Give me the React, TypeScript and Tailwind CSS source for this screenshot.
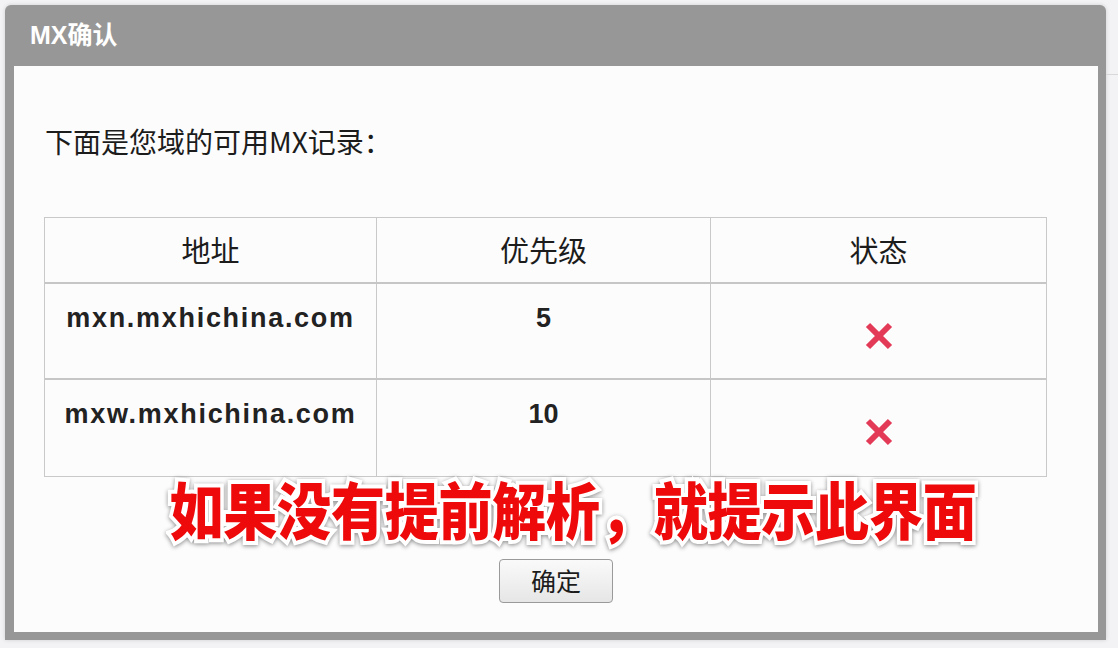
import React from "react";

const cjk = '"Noto Sans CJK SC", "Noto Sans", sans-serif';
const latin = '"Liberation Sans", Arial, "Noto Sans CJK SC", sans-serif';

function RedX() {
  return (
    <svg width="28" height="28" viewBox="0 0 28 28">
      <path d="M3 3 L25 25 M25 3 L3 25" stroke="#e23a57" strokeWidth="6" strokeLinecap="butt" fill="none" />
    </svg>
  );
}

const rows = [
  { host: "mxn.mxhichina.com", pri: "5" },
  { host: "mxw.mxhichina.com", pri: "10" },
];

export default function App() {
  return (
    <div className="relative w-[1118px] h-[648px] overflow-hidden bg-[#f3f3f5] pl-[5px] pt-[5px]">
      <div className="absolute right-0 top-[74px] w-[12px] h-[1px] bg-[#d8d8d8]" />
      <div className="flex flex-col w-[1101px] h-[635px] bg-[#989797] rounded-t-[6px] shadow-[0_0_4px_rgba(0,0,0,0.15)]">
        <div
          className="h-[61px] flex items-center pl-[25px] pt-[1px] text-white font-bold text-[25px]"
          style={{ fontFamily: latin }}
        >
          MX确认
        </div>
        <div className="flex-1 ml-[9px] mr-[8px] mb-[8px] bg-[#fdfcfd] flex flex-col">
          <div
            className="pt-[58px] pl-[31px] h-[92px] text-[28px] leading-[34px] text-[#1c1c1c]"
            style={{ fontFamily: cjk }}
          >
            下面是您域的可用MX记录：
          </div>
          <div className="mt-[59px] ml-[30px] w-[1003px] border border-[#c9c9c9]">
            <div
              className="grid grid-cols-[332px_334px_335px] h-[66px] border-b-2 border-[#c6c6c6] text-[29px] text-[#1c1c1c]"
              style={{ fontFamily: cjk }}
            >
              <div className="flex items-center justify-center border-r border-[#c9c9c9]">地址</div>
              <div className="flex items-center justify-center border-r border-[#c9c9c9]">优先级</div>
              <div className="flex items-center justify-center">状态</div>
            </div>
            {rows.map((r, i) => (
              <div
                key={r.host}
                className={
                  "grid grid-cols-[332px_334px_335px] h-[96px] " +
                  (i === 0 ? "border-b-2 border-[#c6c6c6]" : "")
                }
              >
                <div
                  className="border-r border-[#c9c9c9] pt-[18px] text-center font-bold text-[27px] leading-[32px] tracking-[1.7px] text-[#222]"
                  style={{ fontFamily: latin }}
                >
                  {r.host}
                </div>
                <div
                  className="border-r border-[#c9c9c9] pt-[18px] text-center font-bold text-[27px] leading-[32px] text-[#222]"
                  style={{ fontFamily: latin }}
                >
                  {r.pri}
                </div>
                <div className="flex justify-center pt-[38px]">
                  <RedX />
                </div>
              </div>
            ))}
          </div>
          <div className="flex justify-center pl-[34px] -mt-[3px] h-[70px]">
            <div
              className="text-[54px] leading-[70px] font-black text-[#ee0a0a] tracking-[-0.2px] scale-y-[1.15] [paint-order:stroke_fill] [-webkit-text-stroke:7px_#ffffff] drop-shadow-[0_1px_2px_rgba(0,0,0,0.45)]"
              style={{ fontFamily: cjk }}
            >
              如果没有提前解析，就提示此界面
            </div>
          </div>
          <div className="flex justify-center mt-[15px]">
            <button
              className="w-[114px] h-[44px] rounded-[4px] border border-[#9a9a9a] bg-gradient-to-b from-[#fafafa] to-[#e6e6e6] text-[25px] text-[#1c1c1c] flex items-center justify-center"
              style={{ fontFamily: cjk }}
            >
              确定
            </button>
          </div>
        </div>
      </div>
    </div>
  );
}
